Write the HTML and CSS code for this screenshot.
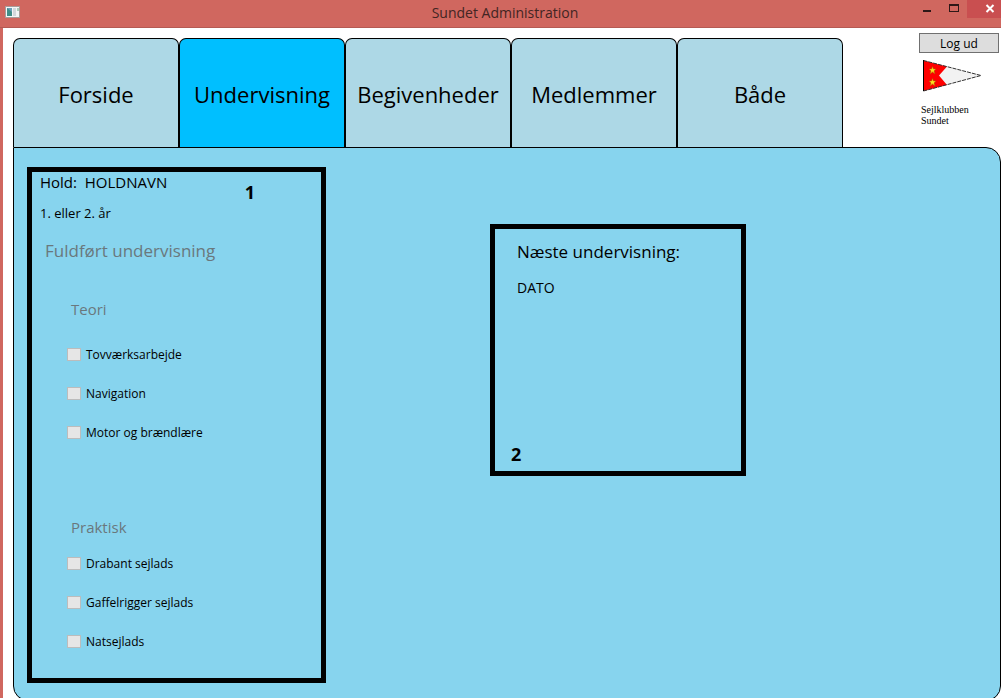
FILE: index.html
```html
<!DOCTYPE html>
<html lang="da">
<head>
<meta charset="utf-8">
<title>Sundet Administration</title>
<link rel="stylesheet" href="styles.css">
</head>
<body>
<div class="window">
  <header class="titlebar">
    <svg class="app-icon" width="16" height="13" viewBox="0 0 16 13" aria-hidden="true">
      <rect x="0.5" y="0.5" width="14" height="11" fill="#f4f6f6" stroke="#a89c99"/>
      <rect x="2" y="2" width="5" height="8" fill="#3f8f88"/>
      <path d="M2 2h5v4z" fill="#6a9fb8"/>
      <rect x="8" y="2" width="3" height="8" fill="#d3d9dc"/>
      <rect x="12" y="2" width="2" height="3" fill="#a9cdb8"/>
    </svg>
    <h1 class="title">Sundet Administration</h1>
    <div class="window-buttons">
      <button class="window-button" type="button" aria-label="Minimer">
        <svg width="10" height="12" viewBox="0 0 10 12"><path d="M1 9h8" stroke="#2e1817" stroke-width="2"/></svg>
      </button>
      <button class="window-button" type="button" aria-label="Maksimer">
        <svg width="10" height="12" viewBox="0 0 10 12"><path d="M0.5 2v8M9.500 2v8M0 9.500h10" fill="none" stroke="#2e1817" stroke-width="1"/><path d="M0 3h10" stroke="#2e1817" stroke-width="2"/></svg>
      </button>
      <button class="window-button close" type="button" aria-label="Luk">
        <svg width="10" height="12" viewBox="0 0 10 12"><path d="M1.500 3l7 7M8.500 3l-7 7" stroke="#fff" stroke-width="2"/></svg>
      </button>
    </div>
  </header>

  <main class="content">
    <div class="top">
      <nav class="tabs">
        <button class="tab" type="button">Forside</button>
        <button class="tab active" type="button" aria-current="page">Undervisning</button>
        <button class="tab" type="button">Begivenheder</button>
        <button class="tab" type="button">Medlemmer</button>
        <button class="tab" type="button">Både</button>
      </nav>
      <div class="account">
        <button class="logout" type="button">Log ud</button>
        <svg class="flag" width="62" height="34" viewBox="0 0 62 34" aria-hidden="true">
          <path d="M1.500 1.500L59 16.500L1.500 32z" fill="#f2f2f2"/>
          <path d="M1.500 1.500L25 7.500L17 16.500L25 26L1.500 32z" fill="#f00"/>
          <path d="M1.500 1.500L59 16.500L1.500 32" fill="none" stroke="#333" stroke-dasharray="4 1"/>
          <path d="M1.500 1v31" stroke="#000"/>
          <path id="star" d="M10.500 7.500l1 2.500h2.500l-2 2l1 3l-2.500-2l-2.500 2l1-3l-2-2h2.500z" fill="#ffde20" stroke="#a55a00" stroke-width="0.5"/>
          <use href="#star" y="12"/>
        </svg>
        <p class="club">Sejlklubben<br>Sundet</p>
      </div>
    </div>

    <div class="panel">
      <section class="frame team">
        <p class="team-name">Hold:&nbsp; HOLDNAVN</p>
        <p class="team-year">1. eller 2. år</p>
        <h2 class="heading">Fuldført undervisning</h2>
        <h3 class="subheading">Teori</h3>
        <div class="checks">
          <label class="check"><input type="checkbox" disabled>Tovværksarbejde</label>
          <label class="check"><input type="checkbox" disabled>Navigation</label>
          <label class="check"><input type="checkbox" disabled>Motor og brændlære</label>
        </div>
        <h3 class="subheading practice">Praktisk</h3>
        <div class="checks">
          <label class="check"><input type="checkbox" disabled>Drabant sejlads</label>
          <label class="check"><input type="checkbox" disabled>Gaffelrigger sejlads</label>
          <label class="check"><input type="checkbox" disabled>Natsejlads</label>
        </div>
        <span class="marker marker-one">1</span>
      </section>

      <section class="frame next">
        <h2 class="next-heading">Næste undervisning:</h2>
        <p class="date">DATO</p>
        <span class="marker marker-two">2</span>
      </section>
    </div>
  </main>
</div>
</body>
</html>
```
FILE: styles.css
```css
* {
  box-sizing: border-box;
}

body {
  margin: 0;
  background: #fff;
  color: #000;
  font-family: "Open Sans", "Noto Sans", sans-serif;
  font-size: 12px;
}

h1, h2, h3, p {
  margin: 0;
  font-weight: 400;
}

button {
  margin: 0;
  padding: 0;
  font: inherit;
  color: inherit;
}

.window {
  display: flex;
  flex-direction: column;
  min-height: 100vh;
  overflow: hidden;
}

.titlebar {
  display: grid;
  grid-template-columns: 1fr auto 1fr;
  height: 28px;
  padding-left: 5px;
  background: #d0675f;
  border-bottom: 1px solid #b55a53;
}

.app-icon {
  margin-top: 6px;
}

.title {
  padding-left: 4px;
  font-size: 14px;
  line-height: 26px;
  color: #422523;
}

.window-buttons {
  display: flex;
  justify-content: flex-end;
}

.window-button {
  display: flex;
  justify-content: center;
  width: 27px;
  height: 18px;
  padding-top: 2px;
  border: 0;
  background: transparent;
}

.window-button.close {
  width: 34px;
  padding-left: 12px;
  background: #c94f50;
}

.content {
  display: flex;
  flex: 1;
  flex-direction: column;
  padding: 10px 0 0 10px;
  border-left: 3px solid #d0675f;
}

.top {
  display: flex;
  justify-content: space-between;
}

.tabs {
  display: flex;
  flex: 0 1 830px;
}

.tab {
  flex: 1;
  height: 109px;
  padding-top: 2px;
  border: 1px solid #000;
  border-bottom: 0;
  border-radius: 7px 7px 0 0;
  background: #add8e6;
  font-size: 22px;
}

.tab.active {
  background: #00bfff;
}

.account {
  display: flex;
  flex-direction: column;
  width: 82px;
  margin-top: -5px;
}

.logout {
  width: 80px;
  height: 20px;
  padding-top: 1px;
  border: 1px solid #707070;
  background: #ddd;
  line-height: 17px;
}

.flag {
  margin: 6px 0 0 3px;
}

.club {
  margin: 11px 0 0 2px;
  font-family: "Liberation Serif", serif;
  font-size: 10px;
  line-height: 11px;
}

.panel {
  display: flex;
  flex: 1;
  align-items: flex-start;
  gap: 164px;
  margin-bottom: -1px;
  padding: 19px 13px 17px;
  border: 1px solid #000;
  border-radius: 0 15px 15px 15px;
  background: #87d4ee;
}

.frame {
  position: relative;
  border: 5px solid #000;
}

.team {
  width: 299px;
  padding: 0 8px 28px;
}

.team-name {
  font-size: 15px;
  line-height: 20px;
}

.team-year {
  margin-top: 11px;
  font-size: 13px;
  line-height: 20px;
}

.heading {
  margin: 14px 0 0 5px;
  font-size: 17px;
  line-height: 28px;
  color: #6a787d;
}

.subheading {
  margin: 32px 0 0 31px;
  font-size: 15px;
  line-height: 24px;
  color: #6a787d;
}

.practice {
  margin-top: 74px;
}

.checks {
  display: flex;
  flex-direction: column;
  align-items: flex-start;
  gap: 23px;
  margin: 26px 0 0 27px;
}

.practice + .checks {
  margin-top: 17px;
}

.check {
  display: flex;
  align-items: flex-start;
  gap: 5px;
  line-height: 16px;
}

.check input {
  width: 14px;
  height: 13px;
  margin: 1px 0 0;
  appearance: none;
  border: 1px solid #bcbcbc;
  background: #e6e6e6;
}

.next {
  width: 256px;
  min-height: 252px;
  margin-top: 57px;
  padding: 9px 22px;
}

.next-heading {
  font-size: 17px;
  line-height: 28px;
}

.date {
  margin-top: 12px;
  font-size: 14px;
  line-height: 20px;
}

.marker {
  position: absolute;
  font-size: 18px;
  font-weight: 700;
  line-height: 24px;
}

.marker-one {
  top: 8px;
  right: 66px;
}

.marker-two {
  bottom: 5px;
  left: 16px;
}
```
